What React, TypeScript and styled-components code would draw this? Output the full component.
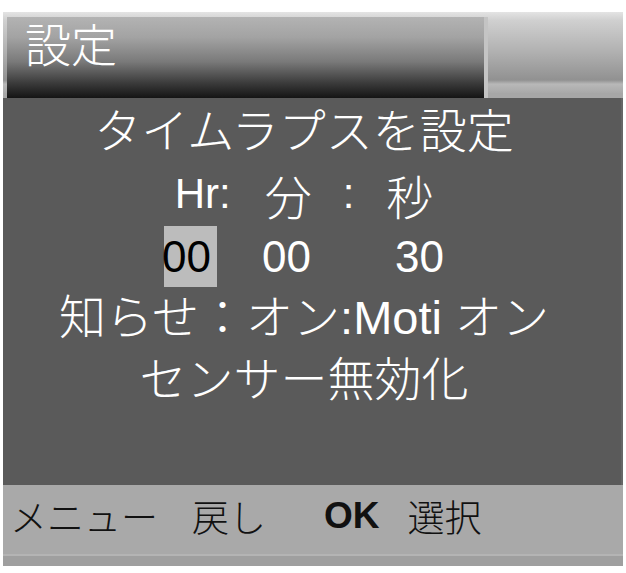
import React from 'react'
import styled, { createGlobalStyle } from 'styled-components'

const GlobalStyle = createGlobalStyle`
    html, body {
        margin: 0;
        padding: 0;
        background: #fff;
    }
`

const App = () => {
    return (
        <>
            <GlobalStyle />
            <Screen>
                <Header>
                    <TitlePanel>設定</TitlePanel>
                </Header>
                <Body>
                    <Line>タイムラプスを設定</Line>
                    <Row>
                        <Label>Hr:</Label>
                        <Kanji $ml={34}>分</Kanji>
                        <Label $ml={31}>:</Label>
                        <Kanji $ml={32}>秒</Kanji>
                    </Row>
                    <Row>
                        <Selected>00</Selected>
                        <Digits $ml={45}>00</Digits>
                        <Digits $ml={84}>30</Digits>
                    </Row>
                    <Line>知らせ：オン:Moti オン</Line>
                    <Line>センサー無効化</Line>
                </Body>
                <Footer>
                    <Key>メニュー</Key>
                    <Key $ml={34}>戻し</Key>
                    <Key $ml={58} $bold>OK</Key>
                    <Key $ml={28}>選択</Key>
                </Footer>
                <BottomStrip />
            </Screen>
        </>
    )
}

export default App

const Screen = styled.div`
    margin: 12px 3px 0 3px;
    width: 620px;
    height: 561px;
    display: flex;
    flex-direction: column;
    font-family: "Liberation Sans", "Noto Sans CJK JP", sans-serif;
`

const Header = styled.header`
    height: 86px;
    padding: 5px 0 0 4px;
    box-sizing: border-box;
    border-bottom: 5px solid #a7a7a7;
    background: linear-gradient(
        to bottom,
        #e4e4e4 0%,
        #d0d0d0 10%,
        #b0b0b0 50%,
        #919191 84%,
        #b8b8b8 89%,
        #a9a9a9 100%
    );
    display: flex;
`

const TitlePanel = styled.div`
    width: 481px;
    height: 81px;
    box-sizing: border-box;
    padding-left: 18px;
    border-right: 4px solid #c4c4c4;
    background: linear-gradient(
        to bottom,
        #b3b3b3 0%,
        #a3a3a3 25%,
        #7a7a7a 55%,
        #3a3a3a 82%,
        #141414 100%
    );
    color: #fff;
    font-family: "Noto Sans CJK JP", sans-serif;
    font-weight: 300;
    font-size: 46px;
    line-height: 50px;
`

const Body = styled.main`
    height: 387px;
    box-sizing: border-box;
    padding: 3px 16px 0 0;
    background: #5a5a5a;
    border-right: 2px solid #666;
    color: #fff;
    display: flex;
    flex-direction: column;
`

const Line = styled.div`
    height: 62px;
    line-height: 62px;
    text-align: center;
    font-size: 47px;
    font-weight: 300;
    white-space: nowrap;
`

const Row = styled.div`
    height: 62px;
    display: flex;
    justify-content: center;
    align-items: center;
`

const Label = styled.span<{ $ml?: number }>`
    margin-left: ${p => p.$ml ?? 0}px;
    font-size: 42px;
`

const Kanji = styled.span<{ $ml?: number }>`
    margin-left: ${p => p.$ml ?? 0}px;
    font-family: "Noto Sans CJK JP", sans-serif;
    font-weight: 300;
    font-size: 47px;
`

const Digits = styled.span<{ $ml?: number }>`
    margin-left: ${p => p.$ml ?? 0}px;
    font-size: 44px;
    line-height: 61px;
`

const Selected = styled(Digits)`
    width: 53px;
    height: 61px;
    box-sizing: border-box;
    text-indent: -2px;
    background: #bcbcbc;
    color: #000;
`

const Footer = styled.footer`
    height: 71px;
    box-sizing: border-box;
    padding: 0 0 8px 7px;
    background: #a9a9a9;
    border-bottom: 2px solid #b4b4b4;
    display: flex;
    align-items: center;
    color: #111;
`

const Key = styled.span<{ $ml?: number; $bold?: boolean }>`
    margin-left: ${p => p.$ml ?? 0}px;
    font-size: 37px;
    font-weight: ${p => (p.$bold ? 700 : 300)};
    white-space: nowrap;
`

const BottomStrip = styled.div`
    height: 10px;
    background: #9f9f9f;
`
